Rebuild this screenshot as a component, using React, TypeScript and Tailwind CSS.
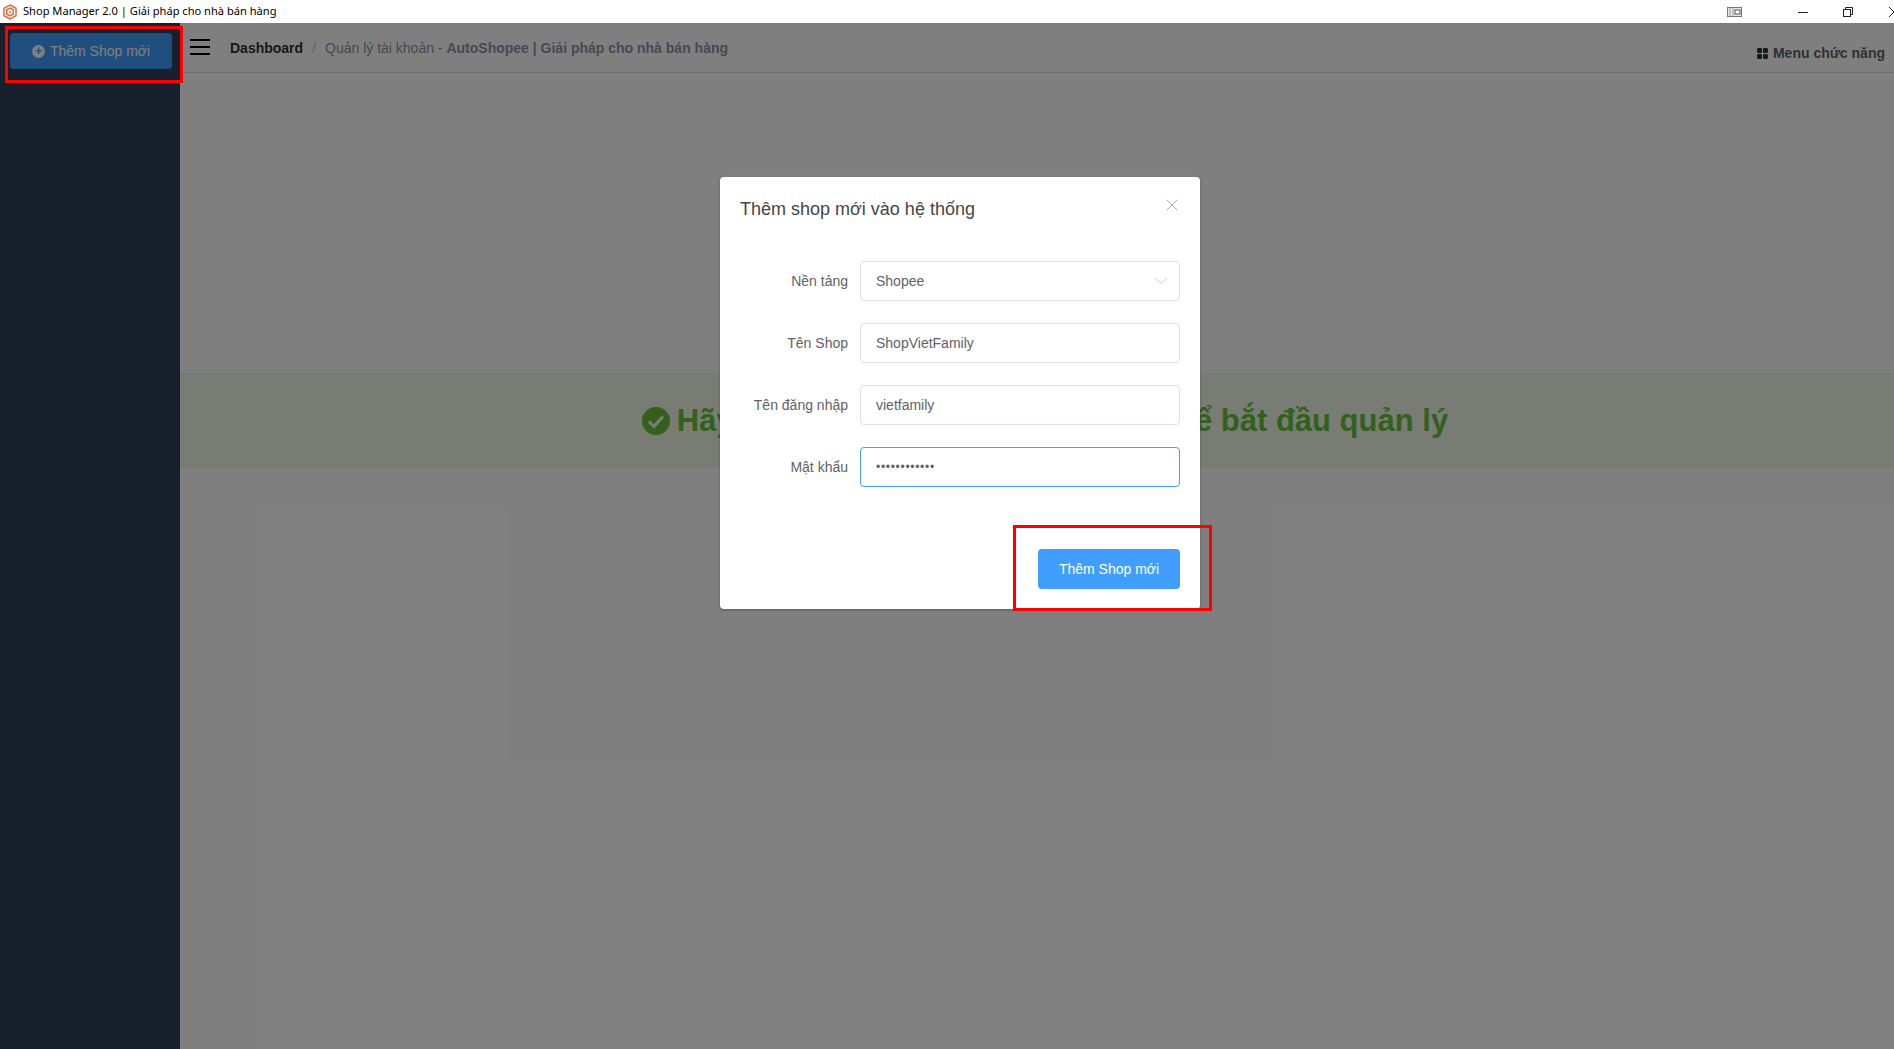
import React from "react";
import { X, ChevronDown, LayoutGrid } from "lucide-react";

const font = { fontFamily: '"Liberation Sans", Arial, sans-serif' };

function Logo() {
  return (
    <svg width="16" height="16" viewBox="0 0 16 16" fill="none" stroke="#ea6a3c" strokeWidth="1.5">
      <path d="M8 1 14 4.3V11.7L8 15 2 11.7V4.3Z" />
      <path d="M8 4 11.2 5.8V10.2L8 12 4.8 10.2V5.8Z" />
      <path d="M8 7V9.5" />
    </svg>
  );
}

function Field({ label, children, active }: { label: string; children: React.ReactNode; active?: boolean }) {
  return (
    <div className="flex items-center h-10 mb-[22px]">
      <div className="w-[120px] pr-3 text-right text-sm text-[#606266] shrink-0">{label}</div>
      <div
        className={`flex-1 h-10 rounded border bg-white flex items-center justify-between pl-[15px] pr-[7px] text-sm text-[#606266] ${
          active ? "border-[#409eff]" : "border-[#dcdfe6]"
        }`}
      >
        {children}
      </div>
    </div>
  );
}

export default function App() {
  return (
    <div className="h-screen w-full flex flex-col overflow-hidden bg-white relative" style={font}>
      <div className="h-[23px] shrink-0 bg-white flex items-center pl-[2px] text-black">
        <Logo />
        <span className="ml-[5px] text-[11.1px]" style={{ fontFamily: '"Noto Sans", sans-serif' }}>
          Shop Manager 2.0 | Giải pháp cho nhà bán hàng
        </span>
        <div className="ml-auto flex items-center">
          <svg width="15" height="10" viewBox="0 0 15 10" className="mr-[56px]" fill="none">
            <rect x="0.5" y="0.5" width="14" height="9" fill="#e8e8e8" stroke="#777" />
            <rect x="8" y="3" width="5" height="4" fill="#fff" stroke="#555" />
            <path d="M3 1V9M6 1V9" stroke="#999" />
          </svg>
          <svg width="10" height="10" viewBox="0 0 10 10" className="mr-[35px]" fill="none">
            <path d="M0 5.5H10" stroke="#222" />
          </svg>
          <svg width="10" height="10" viewBox="0 0 10 10" className="mr-[36px]" fill="none" stroke="#222">
            <rect x="0.5" y="2.5" width="7" height="7" />
            <path d="M2.5 2.5V0.5H9.5V7.5H7.5" />
          </svg>
          <svg width="5" height="10" viewBox="0 0 5 10" fill="none">
            <path d="M0 0 5 5M0 10 5 5" stroke="#222" />
          </svg>
        </div>
      </div>

      <div className="flex-1 flex relative min-h-0">
        <aside className="w-[180px] shrink-0 bg-[#30405c] pt-[10px] px-[10px]">
          <button className="w-[162px] h-9 rounded bg-[#409eff] text-white text-sm flex items-center justify-center gap-[5px]">
            <span className="w-[13px] h-[13px] rounded-full bg-white text-[#409eff] flex items-center justify-center text-xs leading-none font-bold">
              +
            </span>
            Thêm Shop mới
          </button>
        </aside>
        <main className="flex-1 flex flex-col bg-white min-w-0">
          <header className="h-[50px] shrink-0 border-b border-[#e4e4e4] flex items-start">
            <svg width="20" height="16" viewBox="0 0 20 16" className="ml-[10px] mt-[16px]" fill="#000">
              <rect x="0" y="0" width="20" height="2" />
              <rect x="0" y="7" width="20" height="2" />
              <rect x="0" y="14" width="20" height="2" />
            </svg>
            <div className="ml-[20px] mt-[17px] text-sm leading-4">
              <span className="font-bold text-[#303133]">Dashboard</span>
              <span className="mx-[9px] text-[#c0c4cc]">/</span>
              <span className="text-[#8a93a6]">Quản lý tài khoản - </span>
              <span className="font-bold text-[#8a93a6]">AutoShopee | Giải pháp cho nhà bán hàng</span>
            </div>
            <div className="ml-auto mr-[9px] mt-[22px] flex items-center gap-[4px] text-sm leading-4 font-bold text-[#606266]">
              <LayoutGrid size={13} fill="#303133" stroke="#303133" />
              Menu chức năng
            </div>
          </header>
          <div className="flex-1 pt-[300px]">
            <div className="h-[95px] bg-[#f0f9eb] flex items-center justify-center gap-[7px] text-[31px] leading-[90px] font-bold text-[#67c23a] pl-[16px]">
              <svg width="28" height="28" viewBox="0 0 28 28">
                <circle cx="14" cy="14" r="14" fill="#67c23a" />
                <path d="M7 14.5 12 19.5 21 9.5" fill="none" stroke="#f0f9eb" strokeWidth="3" />
              </svg>
              Hãy thêm shop mới vào hệ thống để bắt đầu quản lý
            </div>
          </div>
        </main>

        <div className="absolute inset-0 bg-black/50 flex justify-center pt-[154px] pl-[26px]">
          <div className="w-[480px] h-[432px] bg-white rounded-sm shadow-[0_1px_3px_rgba(0,0,0,0.3)] relative px-5 pt-5">
            <div className="text-lg leading-6 text-[#303133] font-normal opacity-90">Thêm shop mới vào hệ thống</div>
            <X className="absolute right-[18px] top-[18px] text-[#909399]" size={20} strokeWidth={0.9} />
            <div className="mt-[40px]">
              <Field label="Nền tảng">
                Shopee
                <ChevronDown size={22} strokeWidth={1} className="text-[#c0c4cc]" />
              </Field>
              <Field label="Tên Shop">ShopVietFamily</Field>
              <Field label="Tên đăng nhập">vietfamily</Field>
              <Field label="Mật khẩu" active>
                <span className="text-xs tracking-[0.7px]">••••••••••••</span>
              </Field>
            </div>
            <button className="absolute right-5 bottom-5 w-[142px] h-10 rounded bg-[#409eff] text-white text-sm">
              Thêm Shop mới
            </button>
          </div>
        </div>

        <div className="absolute left-[5px] top-[3px] w-[178px] h-[57px] border-[3px] border-[#ff0000]" />
        <div className="absolute left-[1013px] top-[502px] w-[199px] h-[86px] border-[3px] border-[#ff0000]" />
      </div>
    </div>
  );
}
